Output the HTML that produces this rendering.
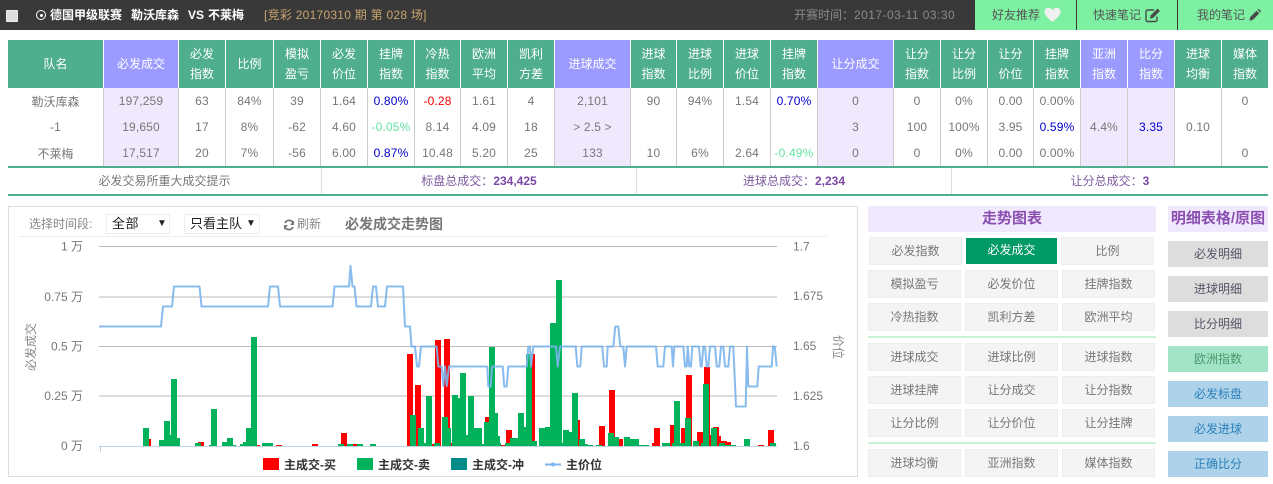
<!DOCTYPE html>
<html><head><meta charset="utf-8">
<style>
*{box-sizing:border-box;margin:0;padding:0}
html,body{width:1273px;height:484px;overflow:hidden;background:#fff}
body{position:relative;font:12px "Liberation Sans","Noto Sans CJK SC",sans-serif;color:#777}
.a{position:absolute;white-space:nowrap}
#top{left:0;top:0;width:1273px;height:30px;background:#393939}
.tb{position:absolute;top:0;height:30px;background:#7ef0a2;color:#555;line-height:30px;font-size:12px}
table{position:absolute;left:8px;top:40px;width:1260px;border-collapse:separate;border-spacing:0;table-layout:fixed}
th{height:48px;background:#4fae8e;color:#fff;font-weight:normal;line-height:20px;border-right:1px solid #fff;text-align:center;font-size:12px}
th.p{background:#9b9bff}
td{height:26px;text-align:center;border-right:1px solid #ccc;color:#777;font-size:12px;padding:0;white-space:nowrap;letter-spacing:.15px}
td:first-child{letter-spacing:0}
td.p{background:#f0e8fd}
th:last-child,td:last-child{border-right:none}
.b{color:#00c}.r{color:#f00}.g{color:#66e3a5}
.ln{left:8px;width:1260px;height:2px;background:#4fae8e}
.s{top:168px;height:26px;line-height:26px;text-align:center;color:#7a5a9e;border-right:1px solid #ddd}
.s b{color:#7b48a8}
.btn{position:absolute;width:93px;height:28px;line-height:26px;text-align:center;background:#f4f4f4;border:1px solid #eee;color:#777}
.rb{position:absolute;left:1168px;width:100px;height:26px;line-height:26px;text-align:center;background:#ddd;color:#556}
.rg{background:#a3e4c9;color:#4a9a6a}.rl{background:#aed2ea;color:#2a80b9}
.ttl{position:absolute;top:206px;height:26px;line-height:26px;background:#f0e8fd;color:#8a4fb0;font-weight:bold;font-size:15px;text-align:center}
</style></head><body>
<div id="top" class="a"></div>
<div class="a" style="left:6px;top:10px;width:12px;height:12px;background:#ddd;border:1px solid #eee;border-radius:1px"></div>
<div class="a" style="left:36px;top:10px;width:10px;height:10px;border:1.5px solid #fff;border-radius:50%"></div>
<div class="a" style="left:39.5px;top:13.5px;width:3px;height:3px;background:#fff;border-radius:50%"></div>
<div class="a" style="left:50px;top:7px;color:#fff;font-weight:bold;line-height:16px">德国甲级联赛</div>
<div class="a" style="left:131px;top:7px;color:#fff;font-weight:bold;line-height:16px">勒沃库森</div>
<div class="a" style="left:188px;top:7px;color:#fff;font-weight:bold;line-height:16px">VS</div>
<div class="a" style="left:208px;top:7px;color:#fff;font-weight:bold;line-height:16px">不莱梅</div>
<div class="a" style="left:264px;top:7px;color:#c8a46e;line-height:16px;letter-spacing:.26px">[竞彩 20170310 期 第 028 场]</div>
<div class="a" style="left:794px;top:7px;color:#8a8a8a;line-height:16px">开赛时间：<span style="letter-spacing:.45px">2017-03-11 03:30</span></div>
<div class="tb" style="left:975px;width:101px;padding-left:17px">好友推荐</div>
<div class="tb" style="left:1077px;width:100px;padding-left:16px">快速笔记</div>
<div class="tb" style="left:1178px;width:95px;padding-left:19px">我的笔记</div>
<svg class="a" style="left:1044px;top:7px" width="17" height="16" viewBox="0 0 17 16"><path d="M8.5 15C3 10.5.5 8 .5 4.8.5 2.300 2.500.8 4.500.8c1.700 0 3.100.9 4 2.400C9.400 1.700 10.800.8 12.500.8c2 0 4 1.500 4 4C16.500 8 14 10.500 8.500 15z" fill="#f0f0f0"/></svg>
<svg class="a" style="left:1145px;top:7px" width="16" height="16" viewBox="0 0 16 16"><path d="M12 9.500V13a1.500 1.500 0 0 1-1.500 1.500H2.500A1.500 1.500 0 0 1 1 13V4.500A1.500 1.500 0 0 1 2.500 3H9" fill="none" stroke="#4a4a4a" stroke-width="1.400"/><path d="M5.500 8.500L12.500 1.500l2.500 2.500-7 7-3 .6z" fill="#4a4a4a"/></svg>
<svg class="a" style="left:1249px;top:9px" width="12" height="12" viewBox="0 0 12 12"><path d="M1 8.300L7.600 1.700l2.700 2.700L3.700 11 .5 11.500zM8.500.8l.8-.5c.4-.2.800-.2 1.100.1l1.200 1.200c.3.300.3.700.1 1.100l-.5.800z" fill="#4a4a4a"/></svg>

<table>
<colgroup><col style="width:96px"><col style="width:75px"><col style="width:47px"><col style="width:48px"><col style="width:47px"><col style="width:47px"><col style="width:47px"><col style="width:46px"><col style="width:47px"><col style="width:47px"><col style="width:76px"><col style="width:46px"><col style="width:47px"><col style="width:47px"><col style="width:47px"><col style="width:76px"><col style="width:47px"><col style="width:47px"><col style="width:46px"><col style="width:47px"><col style="width:47px"><col style="width:47px"><col style="width:47px"><col style="width:46px"></colgroup>
<tr><th>队名</th><th class="p">必发成交</th><th>必发<br>指数</th><th>比例</th><th>模拟<br>盈亏</th><th>必发<br>价位</th><th>挂牌<br>指数</th><th>冷热<br>指数</th><th>欧洲<br>平均</th><th>凯利<br>方差</th><th class="p">进球成交</th><th>进球<br>指数</th><th>进球<br>比例</th><th>进球<br>价位</th><th>挂牌<br>指数</th><th class="p">让分成交</th><th>让分<br>指数</th><th>让分<br>比例</th><th>让分<br>价位</th><th>挂牌<br>指数</th><th class="p">亚洲<br>指数</th><th class="p">比分<br>指数</th><th>进球<br>均衡</th><th>媒体<br>指数</th></tr>
<tr><td>勒沃库森</td><td class="p">197,259</td><td>63</td><td>84%</td><td>39</td><td>1.64</td><td class="b">0.80%</td><td class="r">-0.28</td><td>1.61</td><td>4</td><td class="p">2,101</td><td>90</td><td>94%</td><td>1.54</td><td class="b">0.70%</td><td class="p">0</td><td>0</td><td>0%</td><td>0.00</td><td>0.00%</td><td class="p"></td><td class="p"></td><td></td><td>0</td></tr>
<tr><td>-1</td><td class="p">19,650</td><td>17</td><td>8%</td><td>-62</td><td>4.60</td><td class="g">-0.05%</td><td>8.14</td><td>4.09</td><td>18</td><td class="p">&gt; 2.5 &gt;</td><td></td><td></td><td></td><td></td><td class="p">3</td><td>100</td><td>100%</td><td>3.95</td><td class="b">0.59%</td><td class="p">4.4%</td><td class="p b">3.35</td><td>0.10</td><td></td></tr>
<tr><td>不莱梅</td><td class="p">17,517</td><td>20</td><td>7%</td><td>-56</td><td>6.00</td><td class="b">0.87%</td><td>10.48</td><td>5.20</td><td>25</td><td class="p">133</td><td>10</td><td>6%</td><td>2.64</td><td class="g">-0.49%</td><td class="p">0</td><td>0</td><td>0%</td><td>0.00</td><td>0.00%</td><td class="p"></td><td class="p"></td><td></td><td>0</td></tr>
</table>
<div class="a ln" style="top:166px"></div>
<div class="a ln" style="top:194px"></div>
<div class="a s" style="left:8px;width:314px;color:#777">必发交易所重大成交提示</div>
<div class="a s" style="left:322px;width:315px">标盘总成交：<b>234,425</b></div>
<div class="a s" style="left:637px;width:315px">进球总成交：<b>2,234</b></div>
<div class="a s" style="left:952px;width:316px;border:none">让分总成交：<b>3</b></div>

<div class="a" style="left:8px;top:206px;width:850px;height:271px;border:1px solid #ddd"></div>
<div class="a" style="left:29px;top:216px;line-height:16px;color:#888">选择时间段:</div>
<div class="a" style="left:106px;top:214px;width:64px;height:20px;border:1px solid #eee;color:#222;font-size:13px;line-height:18px;padding-left:5px;letter-spacing:.5px">全部<span style="position:absolute;left:50px;font-size:10px">▼</span></div>
<div class="a" style="left:184px;top:214px;width:76px;height:20px;border:1px solid #eee;color:#222;font-size:13px;line-height:18px;padding-left:5px;letter-spacing:0">只看主队<span style="position:absolute;left:61px;font-size:10px">▼</span></div>
<svg class="a" style="left:283px;top:219px" width="12" height="12" viewBox="0 0 12 12"><path d="M10.500 4.500A4.600 4.600 0 0 0 2 4M1.500 7.500A4.600 4.600 0 0 0 10 8" fill="none" stroke="#777" stroke-width="1.800"/><path d="M11 1.500V6H7zM1 10.500V6h4z" fill="#777"/></svg>
<div class="a" style="left:297px;top:216px;line-height:16px;color:#888">刷新</div>
<div class="a" style="left:345px;top:216px;line-height:16px;color:#777;font-weight:bold;font-size:14px">必发成交走势图</div>
<div class="a" style="left:19px;top:236px;width:808px;height:1px;background:#eee"></div>

<svg class="a" style="left:0;top:0" width="1273" height="484" font-family="'Liberation Sans','Noto Sans CJK SC',sans-serif" font-size="12">
<g stroke="#bbb" stroke-width="1"><path d="M99 246.500H777M99 297H777M99 346.500H777M99 396H777"/></g>
<path fill="#f00" d="M149 439h2v7h-2zM198 442h6v4h-6zM257 445h3v1h-3zM276 445h6v1h-6zM312 444h6v2h-6zM341 433h6v13h-6zM353 444h4v2h-4zM407 354h6v92h-6zM415 385h6v61h-6zM432 444h2v2h-2zM435 340h6v106h-6zM444 339h6v107h-6zM451 443h1v3h-1zM485 417h4v29h-4zM501 445h4v1h-4zM506 430h6v16h-6zM532 354h3v92h-3zM578 420h2v26h-2zM599 426h6v20h-6zM609 390h6v56h-6zM619 439h4v7h-4zM652 443h2v3h-2zM654 428h6v18h-6zM670 425h4v21h-4zM681 428h4v18h-4zM686 375h6v71h-6zM697 432h6v14h-6zM704 367h6v79h-6zM709 435h2v11h-2zM713 427h6v19h-6zM717 436h4v10h-4zM721 441h6v5h-6zM727 442h4v4h-4zM758 445h6v1h-6zM768 430h6v16h-6z"/>
<path fill="#00b259" d="M143 428h6v18h-6zM159 440h6v6h-6zM164 421h6v25h-6zM169 435h2v11h-2zM171 379h6v67h-6zM177 438h3v8h-3zM195 443h6v3h-6zM209 445h2v1h-2zM211 409h6v37h-6zM222 442h6v4h-6zM227 438h6v8h-6zM233 445h3v1h-3zM240 444h6v2h-6zM243 442h6v4h-6zM246 428h6v18h-6zM251 337h6v109h-6zM262 443h6v3h-6zM267 443h6v3h-6zM338 444h6v2h-6zM347 444h6v2h-6zM357 444h6v2h-6zM370 444h6v2h-6zM410 415h6v31h-6zM418 428h6v18h-6zM424 443h2v3h-2zM426 396h6v50h-6zM434 443h6v3h-6zM442 417h6v29h-6zM447 428h4v18h-4zM452 395h6v51h-6zM457 398h3v48h-3zM460 373h6v73h-6zM466 435h2v11h-2zM468 396h6v50h-6zM474 428h8v18h-8zM482 444h2v2h-2zM484 422h6v24h-6zM489 347h6v99h-6zM492 413h6v33h-6zM498 436h2v10h-2zM500 443h1v3h-1zM505 443h5v3h-5zM510 438h8v8h-8zM518 413h6v33h-6zM524 427h2v19h-2zM526 354h6v92h-6zM532 441h5v5h-5zM539 428h6v18h-6zM545 427h5v19h-5zM550 323h6v123h-6zM556 280h6v166h-6zM562 443h1v3h-1zM563 430h6v16h-6zM569 432h3v14h-3zM572 393h6v53h-6zM579 439h6v7h-6zM585 444h3v2h-3zM588 445h5v1h-5zM596 445h6v1h-6zM608 433h6v13h-6zM614 437h5v9h-5zM624 437h6v9h-6zM630 439h9v7h-9zM639 445h10v1h-10zM662 443h8v3h-8zM672 443h6v3h-6zM674 401h6v45h-6zM680 443h5v3h-5zM685 418h6v28h-6zM693 441h6v5h-6zM701 443h3v3h-3zM703 384h6v62h-6zM711 428h6v18h-6zM719 443h6v3h-6zM725 445h6v1h-6zM731 445h5v1h-5zM744 439h6v7h-6zM770 443h6v3h-6z"/>
<path d="M99 446.500H777" stroke="#c0d4e4" stroke-width="1"/><path d="M100.500 447v5" stroke="#c0d4e4" stroke-width="1"/>
<path fill="none" stroke="#7cb5ec" stroke-width="2" stroke-linejoin="round" opacity=".9" d="M99 326.500H161L163 306.500H172L174 286.500H199.500L201.500 306.500H268L270 286.500H278L280 306.500H332.500L334.500 286.500H349L350.500 266L352.500 286.500H354.500L356.500 306.500H371L373 286.500H376L378 306.500H385L387 286.500H403L405 326.500H410L411.500 346.500H415L417 366.500H419L421 346.500H436.700L438.300 366.500H441.700L443.300 386L445 366.500L446.700 386L449 366.500H487.300L488.300 386.500H490.700L492 366.500H502.700L504.300 386.500H506.700L508.300 366.500H526.700L528.300 346.500H530L531 366.500L533.300 346.500H556L557.700 366.500L560 346.500H575.700L577.300 366.500H580.300L581.700 346.500H602.300L604 366.500H606.700L607.700 346.500H613.300L615.300 326.500H618.300L620.300 346.500H623.300L625 366.500L626.700 346.500H656L657.700 366.500H663.300L665 346.500H671.700L673 366.500L674.300 346.500H683.300L685 366.500H686.700L687.700 346.500L689.300 366.500H691L692.300 346.500H699L700.700 366.500H701.700L703.300 346.500H705L706.700 366.500H708.300L710 346.500H715L716.700 366.500H719.300L721 346.500H723.300L725 366.500H728.300L730 346.500H733.300L736 406.500H745.700L747 346.500L748.300 386.500H757.300L758.700 366.500H771.700L773 346.500H774.700L776.700 366.500"/>
<g fill="#777" text-anchor="end"><text x="83" y="250.500">1 万</text><text x="83" y="301">0.75 万</text><text x="83" y="350.500">0.5 万</text><text x="83" y="400">0.25 万</text><text x="83" y="450">0 万</text></g>
<g fill="#777"><text x="793" y="250.500">1.7</text><text x="793" y="300">1.675</text><text x="793" y="350">1.65</text><text x="793" y="400">1.625</text><text x="793" y="450">1.6</text></g>
<text transform="translate(35 347) rotate(-90)" fill="#888" text-anchor="middle">必发成交</text>
<text transform="translate(834 347) rotate(90)" fill="#888" text-anchor="middle">价位</text>
<rect x="263" y="458" width="16" height="12" fill="#f00"/><text x="284" y="469" fill="#333" font-weight="bold">主成交-买</text>
<rect x="357" y="458" width="16" height="12" fill="#00b259"/><text x="378" y="469" fill="#333" font-weight="bold">主成交-卖</text>
<rect x="451" y="458" width="16" height="12" fill="#008b8b"/><text x="472" y="469" fill="#333" font-weight="bold">主成交-冲</text>
<path d="M545 464.500H561" stroke="#7cb5ec" stroke-width="2"/><circle cx="553" cy="464.500" r="2" fill="#7cb5ec"/><text x="566" y="469" fill="#333" font-weight="bold">主价位</text>
</svg>

<div class="ttl" style="left:868px;width:288px">走势图表</div>
<div class="ttl" style="left:1168px;width:100px">明细表格/原图</div>
<div class="btn" style="left:869px;top:237px">必发指数</div>
<div class="btn" style="left:966px;top:238px;width:91px;height:26px;line-height:24px;background:#009a66;color:#fff;border:none">必发成交</div>
<div class="btn" style="left:1061px;top:237px">比例</div>
<div class="btn" style="left:868px;top:270px">模拟盈亏</div><div class="btn" style="left:965px;top:270px">必发价位</div><div class="btn" style="left:1062px;top:270px">挂牌指数</div>
<div class="btn" style="left:868px;top:303px">冷热指数</div><div class="btn" style="left:965px;top:303px">凯利方差</div><div class="btn" style="left:1062px;top:303px">欧洲平均</div>
<div class="a" style="left:868px;top:336px;width:288px;height:2px;background:#c8f2d4"></div>
<div class="btn" style="left:868px;top:343px">进球成交</div><div class="btn" style="left:965px;top:343px">进球比例</div><div class="btn" style="left:1062px;top:343px">进球指数</div>
<div class="btn" style="left:868px;top:376px">进球挂牌</div><div class="btn" style="left:965px;top:376px">让分成交</div><div class="btn" style="left:1062px;top:376px">让分指数</div>
<div class="btn" style="left:868px;top:409px">让分比例</div><div class="btn" style="left:965px;top:409px">让分价位</div><div class="btn" style="left:1062px;top:409px">让分挂牌</div>
<div class="a" style="left:868px;top:442px;width:288px;height:2px;background:#c8f2d4"></div>
<div class="btn" style="left:868px;top:449px">进球均衡</div><div class="btn" style="left:965px;top:449px">亚洲指数</div><div class="btn" style="left:1062px;top:449px">媒体指数</div>

<div class="rb" style="top:241px">必发明细</div>
<div class="rb" style="top:276px">进球明细</div>
<div class="rb" style="top:311px">比分明细</div>
<div class="rb rg" style="top:346px">欧洲指数</div>
<div class="rb rl" style="top:381px">必发标盘</div>
<div class="rb rl" style="top:416px">必发进球</div>
<div class="rb rl" style="top:451px">正确比分</div>
</body></html>
